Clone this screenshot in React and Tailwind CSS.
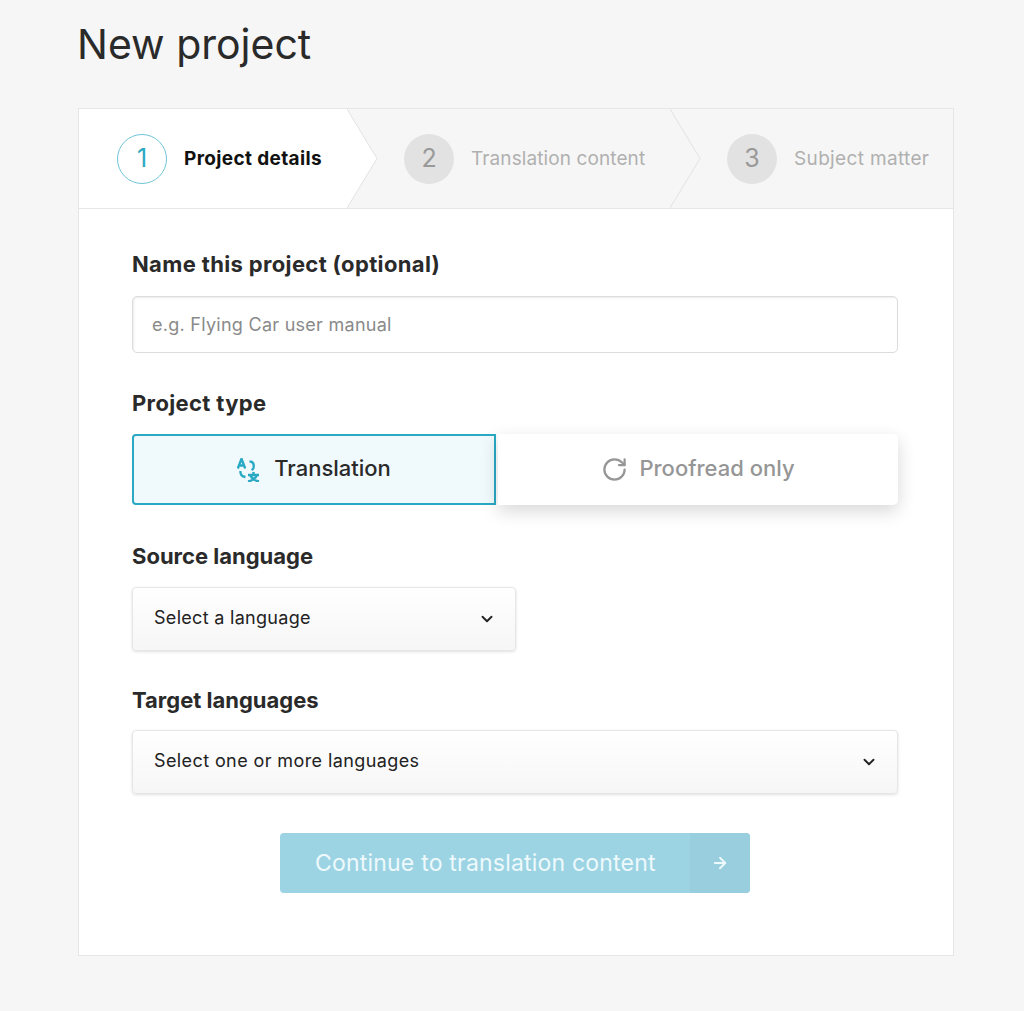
import { ArrowRight, ChevronDown, RotateCw } from "lucide-react";

const font = "font-['Inter','Noto_Sans',sans-serif]";

function TranslateIcon() {
  return (
    <svg width="23" height="24" viewBox="0 0 23 24" fill="none" stroke="#2aa9c4" strokeWidth="2.4" className="mr-[14px]">
      {/* A */}
      <path d="M0.8 10.5 L4.5 0.8 L8.2 10.5 M2 7.5 H7" />
      {/* arcs */}
      <path d="M12.5 3.5 C16 3.5 17.5 6 16.5 10 C16.2 11 15.5 11.6 14.5 12" />
      <path d="M3.5 13 C3 16 4.5 18.5 8.5 19" />
      {/* x shape */}
      <path d="M11 17 H22 M16.5 14 V17 M13 17 C14.5 20 17.5 22.5 22 23.5 M20 17 C18.8 20 15.8 22.5 11 23.5" />
    </svg>
  );
}

function Chevron({ fill }) {
  return (
    <svg width="31" height="99" viewBox="0 0 31 99" className="shrink-0 bg-[#f6f6f6]">
      <path d="M0 0 L30 49.5 L0 99 Z" fill={fill} />
      <path d="M0 0 L30 49.5 L0 99" fill="none" stroke="#e2e2e2" />
    </svg>
  );
}

function Step({ num, label, className, textClass }) {
  return (
    <div className={`flex items-center gap-[17px] ${className}`}>
      <div className="w-[50px] h-[50px] rounded-full bg-[#e2e2e2] text-[#999] text-[25px] flex items-center justify-center">
        {num}
      </div>
      <span className={`mt-[1px] text-[19px] text-[#b0b0b0] ${textClass}`}>{label}</span>
    </div>
  );
}

function Select({ label, className, textClass }) {
  return (
    <div className={`h-[64px] flex items-center justify-between pl-[21px] pr-[19px] bg-gradient-to-b from-white to-[#f6f6f6] border border-[#e6e6e6] rounded-[4px] shadow-[0_1px_3px_rgba(0,0,0,0.12)] text-[18px] text-[#222] ${className}`}>
      <span className={`-mt-[4px] ${textClass}`}>{label}</span>
      <ChevronDown size={18} strokeWidth={2.5} color="#222" />
    </div>
  );
}

export default function App() {
  return (
    <div className={`min-h-[1011px] bg-[#f6f6f6] pl-[78px] pr-[70px] pt-[16px] ${font}`}>
      <h1 className="text-[41px] leading-[56px] text-[#2a2a2a] -ml-[1px]">New project</h1>

      <div className="mt-[36px] h-[848px] bg-white border border-[#e6e6e6]">
        {/* steps */}
        <div className="flex h-[100px] border-b border-[#e6e6e6] bg-[#f6f6f6]">
          <div className="flex items-center gap-[17px] w-[268px] bg-white pl-[38px]">
            <div className="w-[50px] h-[50px] rounded-full border border-[#6fc4d6] text-[#2aa9c4] text-[25px] flex items-center justify-center">
              1
            </div>
            <span className="mt-[1px] text-[19px] tracking-[0.35px] font-bold text-[#111]">Project details</span>
          </div>
          <Chevron fill="#ffffff" />
          <Step num="2" label="Translation content" className="w-[292px] pl-[26px]" textClass="tracking-[0.1px]" />
          <Chevron fill="#f6f6f6" />
          <Step num="3" label="Subject matter" className="pl-[26px]" textClass="tracking-[0.35px]" />
        </div>

        {/* form */}
        <div className="pl-[53px] pr-[55px]">
          <label className="block mt-[40px] text-[22px] leading-[30px] tracking-[0.35px] font-bold text-[#2a2a2a]">
            Name this project (optional)
          </label>
          <input
            placeholder="e.g. Flying Car user manual"
            className="block mt-[17px] w-full h-[57px] px-[19px] rounded-[5px] border border-[#dcdcdc] shadow-[inset_1px_1px_2px_rgba(0,0,0,0.08)] text-[18px] tracking-[0.27px] placeholder:text-[#8a8a8a] outline-none"
          />

          <label className="block mt-[35px] text-[22px] leading-[30px] tracking-[0.35px] font-bold text-[#2a2a2a]">Project type</label>
          <div className="flex mt-[16px] h-[71px]">
            <div className="w-[364px] flex items-center justify-center bg-[#f0f9fc] border-2 border-[#2aa9c4] rounded-l-[4px] text-[22px] font-medium text-[#2a2a2a]">
              <TranslateIcon />
              <span className="-mt-[2px]">Translation</span>
            </div>
            <div className="ml-[2px] flex-1 flex items-center justify-center bg-white rounded-r-[5px] shadow-[0_6px_18px_rgba(0,0,0,0.16)] text-[22px] font-medium text-[#969696]">
              <RotateCw size={27} strokeWidth={2} color="#969696" className="mr-[11px]" />
              <span className="-mt-[2px]">Proofread only</span>
            </div>
          </div>

          <label className="block mt-[36px] text-[22px] leading-[30px] font-bold text-[#2a2a2a]">Source language</label>
          <Select label="Select a language" className="mt-[16px] w-[384px]" textClass="tracking-[0.3px]" />

          <label className="block mt-[34px] text-[22px] leading-[30px] font-bold text-[#2a2a2a]">Target languages</label>
          <Select label="Select one or more languages" className="mt-[15px]" textClass="tracking-[0.4px]" />

          <div className="flex justify-center mt-[39px]">
            <div className="w-[470px] h-[60px] flex rounded-[4px] overflow-hidden bg-[#9dd4e4] text-white">
              <div className="flex-1 flex items-center pl-[35px] text-[23px] tracking-[0.2px] text-[#eef9fc]">
                <span>Continue to translation content</span>
              </div>
              <div className="w-[60px] flex items-center justify-center bg-[#98cede]">
                <ArrowRight size={18} strokeWidth={2.5} color="#eef9fc" />
              </div>
            </div>
          </div>
        </div>
      </div>
    </div>
  );
}
